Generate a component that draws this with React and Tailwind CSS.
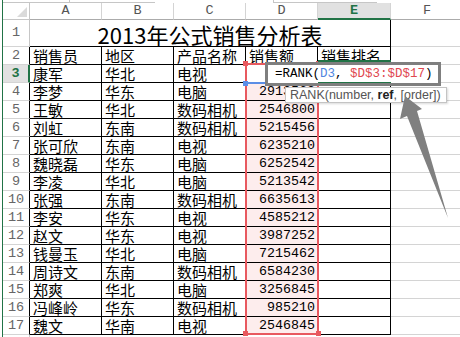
import React from 'react';

const data = [
  ['康军', '华北', '电视', ''],
  ['李梦', '华东', '电脑', '2913562'],
  ['王敏', '华北', '数码相机', '2546800'],
  ['刘虹', '东南', '数码相机', '5215456'],
  ['张可欣', '东南', '电视', '6235210'],
  ['魏晓磊', '华东', '电脑', '6252542'],
  ['李凌', '华北', '电脑', '5213542'],
  ['张强', '东南', '数码相机', '6635613'],
  ['李安', '华东', '电视', '4585212'],
  ['赵文', '华东', '电视', '3987252'],
  ['钱曼玉', '华北', '电脑', '7215462'],
  ['周诗文', '东南', '数码相机', '6584230'],
  ['郑爽', '华北', '电脑', '3256845'],
  ['冯峰岭', '华东', '数码相机', '985210'],
  ['魏文', '华南', '电视', '2546845'],
];

const cjk = "font-['Noto_Sans_CJK_SC',sans-serif]";
const mono = "font-['Liberation_Mono',monospace]";

const RowHead = ({ n, selected }) => (
  <div
    className={`w-[27px] shrink-0 flex items-center justify-center border-b border-b-[#d4d4d4] ${mono} text-[13.5px] leading-[16px] ${
      selected
        ? 'bg-[#e1e1e1] text-[#217346] font-bold border-r-2 border-r-[#217346]'
        : 'text-[#666] border-r border-r-black'
    }`}
  >
    {n}
  </div>
);

const TextCell = ({ children, w = 'w-[72px]' }) => (
  <div className={`${w} shrink-0 border-r border-b border-black pl-[3px] flex items-center ${cjk} text-[15px] leading-[17px] text-black whitespace-nowrap`}>
    {children}
  </div>
);

const GridCell = () => <div className="w-[72px] shrink-0 border-r border-b border-[#d4d4d4]" />;

export default function App() {
  return (
    <div className="relative w-[460px] h-[337px] overflow-hidden bg-white">
      <div className="ml-[2px] border-l border-[#217346] h-full">
        {/* remnant of the formula bar */}
        <div className="flex h-[3px]">
          <div className="w-[67px] border-b border-[#c6c6c6] border-r" />
          <div className="w-[85px] border-b border-[#c6c6c6]" />
          <div className="w-[118px]" />
          <div className="w-[104px] border-b border-l border-[#c6c6c6]" />
        </div>

        {/* column headers */}
        <div className="flex h-[17px]">
          <div className="relative w-[27px] shrink-0 border-r border-b border-[#c6c6c6]">
            <svg className="absolute right-[2px] bottom-[2px]" width="10" height="10" viewBox="0 0 10 10">
              <polygon points="10,0 10,10 0,10" fill="#dadada" />
            </svg>
          </div>
          {['A', 'B', 'C', 'D'].map((c) => (
            <div key={c} className={`w-[72px] shrink-0 border-r border-r-[#d4d4d4] border-b border-b-[#ababab] flex items-center justify-center ${mono} text-[13.5px] leading-[16px] text-[#555]`}>
              {c}
            </div>
          ))}
          <div className={`w-[73px] shrink-0 bg-[#e1e1e1] border-r border-r-[#d4d4d4] border-b-2 border-b-[#217346] flex items-center justify-center ${mono} text-[13.5px] leading-[15px] font-bold text-[#217346]`}>
            E
          </div>
          <div className={`w-[72px] shrink-0 border-b border-b-[#ababab] flex items-center justify-center ${mono} text-[13.5px] leading-[16px] text-[#555]`}>
            F
          </div>
        </div>

        {/* row 1: title */}
        <div className="flex h-[27px]">
          <div className={`w-[27px] shrink-0 flex items-center justify-center border-r border-r-[#c6c6c6] border-b border-b-[#d4d4d4] ${mono} text-[13.5px] leading-[16px] text-[#666]`}>
            1
          </div>
          <div className={`w-[361px] shrink-0 border-r border-b border-black flex items-center justify-center pt-[2px] ${cjk} text-[22px] leading-[24px] text-black`}>
            2013年公式销售分析表
          </div>
          <GridCell />
        </div>

        {/* row 2: headings */}
        <div className="flex h-[18px]">
          <RowHead n={2} />
          <TextCell>销售员</TextCell>
          <TextCell>地区</TextCell>
          <TextCell>产品名称</TextCell>
          <TextCell>销售额</TextCell>
          <TextCell w="w-[73px]">销售排名</TextCell>
          <GridCell />
        </div>

        {data.map((r, i) => (
          <div key={i} className="flex h-[18px]">
            <RowHead n={i + 3} selected={i === 0} />
            <TextCell>{r[0]}</TextCell>
            <TextCell>{r[1]}</TextCell>
            <TextCell>{r[2]}</TextCell>
            <div className={`w-[72px] shrink-0 border-r border-b border-black flex items-center justify-end pr-[2px] ${mono} text-[13.33px] leading-[16px] text-black ${i === 0 ? 'bg-white' : 'bg-[#fdeded]'}`}>
              {r[3]}
            </div>
            <div className="w-[73px] shrink-0 border-r border-b border-black" />
            <GridCell />
          </div>
        ))}
        <div className="flex h-[18px]">
          <div className="w-[27px] shrink-0 border-r border-[#c6c6c6]" />
        </div>
      </div>

      {/* referenced range D3:D17 */}
      <div className="absolute left-[245px] top-[63px] w-[74px] h-[272px] border-2 border-[#e8595f]" />
      <div className="absolute left-[246px] top-[82px] w-[20px] h-[2px] bg-[#5b8ee6]" />
      <div className="absolute left-[243px] top-[61px] w-[5px] h-[5px] bg-[#e8595f]" />
      <div className="absolute left-[316px] top-[61px] w-[5px] h-[5px] bg-[#e8595f]" />
      <div className="absolute left-[243px] top-[81px] w-[5px] h-[5px] bg-[#5b8ee6]" />
      <div className="absolute left-[243px] top-[331px] w-[5px] h-[5px] bg-[#e8595f]" />
      <div className="absolute left-[316px] top-[331px] w-[5px] h-[5px] bg-[#e8595f]" />

      {/* in-cell edit of E3 */}
      <div className="absolute left-[318px] top-[60px] w-[73px] h-[2px] bg-[#217346]" />
      <div className={`absolute left-[265px] top-[62px] w-[176px] h-[24px] border-[3px] border-[#7f7f7f] bg-white flex items-center pl-[7px] ${mono} text-[12.5px] leading-[16px] text-black whitespace-nowrap`}>
        <span>=RANK(</span>
        <span className="text-[#4f86e0]">D3</span>
        <span>,&nbsp;</span>
        <span className="text-[#e0474f]">$D$3:$D$17</span>
        <span>)</span>
      </div>
      <div className="absolute left-[318px] top-[82px] w-[73px] h-[1px] bg-[#217346]" />

      {/* function tooltip */}
      <div className="absolute left-[285px] top-[87px] w-[162px] h-[16px] border border-[#c4c4c4] bg-white shadow-[1px_1px_2px_rgba(0,0,0,0.15)] flex items-center pl-[4px] font-['Liberation_Sans',sans-serif] text-[12.5px] leading-[14px] text-[#555] whitespace-nowrap">
        RANK(number,&nbsp;<b className="text-[#222]">ref</b>, [order])
      </div>

      {/* annotation arrow */}
      <svg className="absolute left-0 top-0 pointer-events-none" width="460" height="337" viewBox="0 0 460 337">
        <polygon points="405,96 422,109 417,111 448,218 407,116 400,119" fill="#808080" />
      </svg>
    </div>
  );
}
